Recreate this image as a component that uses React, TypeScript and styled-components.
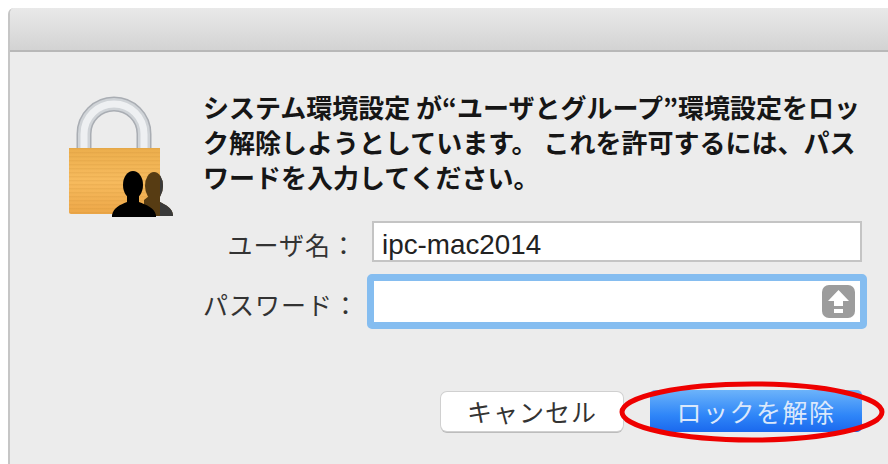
import React from "react";
import styled, { createGlobalStyle } from "styled-components";

const Global = createGlobalStyle`
  html, body { margin: 0; padding: 0; background: #fff; }
  body { width: 888px; height: 464px; overflow: hidden; }
`;

const FONT = `"Noto Sans CJK JP", "Liberation Sans", sans-serif`;

const Sheet = styled.div`
  box-sizing: border-box;
  width: 888px;
  height: 464px;
  padding: 8px 0 0 8px;
  position: relative;
  font-family: ${FONT};
  overflow: hidden;
`;

const Dialog = styled.div`
  height: 456px;
  display: flex;
  flex-direction: column;
  border-left: 2px solid #c6c6c6;
  border-top-left-radius: 6px;
  overflow: hidden;
  background: #ececec;
`;

const TitleBar = styled.div`
  height: 42px;
  flex: none;
  background: linear-gradient(#e9e9e9, #d3d3d3);
  border-bottom: 2px solid #b8b8b8;
`;

const Content = styled.div`
  flex: 1;
  display: flex;
  padding: 37px 22px 0 58px;
`;

const LockSlot = styled.div`
  width: 135px;
  flex: none;
  padding-top: 7px;
`;

const Main = styled.div`
  flex: 1;
  display: flex;
  flex-direction: column;
`;

const Message = styled.p`
  margin: 0;
  font-size: 26px;
  font-weight: 700;
  line-height: 35px;
  color: #161616;
  white-space: nowrap;
  height: 132px;
`;

const Form = styled.div`
  display: flex;
  flex-direction: column;
  gap: 12px;
`;

const Row = styled.div<{ $tall?: boolean }>`
  display: flex;
  align-items: center;
  height: ${(p) => (p.$tall ? "55px" : "41px")};
`;

const Label = styled.label`
  width: 154px;
  flex: none;
  padding-top: 4px;
  text-align: right;
  font-size: 25px;
  letter-spacing: 1px;
  color: #333;
  white-space: nowrap;
`;

const Field = styled.div`
  box-sizing: border-box;
  margin-left: 15px;
  width: 490px;
  height: 41px;
  background: #fff;
  border: 2px solid #c4c4c4;
  padding-left: 8px;
  font-family: "Liberation Sans", sans-serif;
  font-size: 27.8px;
  line-height: 44px;
  color: #222;
`;

const FocusRing = styled.div`
  box-sizing: border-box;
  margin-left: 10px;
  width: 500px;
  height: 55px;
  border: 7px solid #85bdf0;
  border-radius: 5px;
  background: #fff;
  display: flex;
  align-items: center;
  justify-content: flex-end;
  padding-right: 5px;
`;

const Buttons = styled.div`
  display: flex;
  justify-content: flex-end;
  align-items: center;
  gap: 27px;
  margin-top: 61px;
  padding-right: 5px;
`;

const CancelButton = styled.button`
  box-sizing: border-box;
  width: 182px;
  height: 39px;
  border: none;
  border-radius: 6px;
  background: #fff;
  box-shadow: 0 0 0 1px #d0d0d0, 0 2px 0 #bcbcbc;
  font-family: ${FONT};
  font-size: 25px;
  line-height: 1;
  letter-spacing: 1px;
  color: #333;
  padding: 0;
`;

const UnlockButton = styled.button`
  box-sizing: border-box;
  width: 212px;
  height: 42px;
  border: none;
  border-radius: 5px;
  background: linear-gradient(#6cb3fa, #2f86f8 60%, #1a68ee);
  font-family: ${FONT};
  font-size: 25px;
  line-height: 1;
  letter-spacing: 1.5px;
  color: #dbe8fb;
  padding: 0;
`;

const Mark = styled.svg`
  position: absolute;
  left: 618px;
  top: 379px;
  width: 268px;
  height: 66px;
  pointer-events: none;
`;

function LockIcon() {
  const shackle = "M16 54V38a30 30 0 0 1 60 0V54";
  const plate = "M1 52h91v64q0 2-2 2H3q-2 0-2-2z";
  const rear = (
    <>
      <ellipse cx="86" cy="90" rx="9" ry="14" />
      <path d="M81 100h11v6c5 3 12 5 13 13v1H76v-16z" />
    </>
  );
  return (
    <svg width="108" height="124" viewBox="0 0 108 124" style={{ display: "block" }}>
      <defs>
        <linearGradient id="body" x1="0" x2="0" y1="0" y2="1">
          <stop offset="0" stopColor="#ecae4c" />
          <stop offset="0.5" stopColor="#f7bb5e" />
          <stop offset="1" stopColor="#eda748" />
        </linearGradient>
        <pattern id="grain" width="4" height="4" patternUnits="userSpaceOnUse">
          <rect width="4" height="1.5" fill="#c98a30" opacity="0.18" />
        </pattern>
        <clipPath id="offPlate">
          <rect x="92" y="0" width="16" height="124" />
        </clipPath>
      </defs>
      <path d={shackle} fill="none" stroke="#a9adb3" strokeWidth="15" />
      <path d={shackle} fill="none" stroke="#cfd3d7" strokeWidth="12" />
      <path d={shackle} fill="none" stroke="#eef0f2" strokeWidth="7" />
      <path d={plate} fill="url(#body)" />
      <path d={plate} fill="url(#grain)" />
      <g fill="#573c13">{rear}</g>
      <g fill="#3a3a3a" clipPath="url(#offPlate)">{rear}</g>
      <g fill="#000">
        <ellipse cx="65" cy="89" rx="10" ry="14" />
        <path d="M59 100h12v6c7 3 15 5 17 13v2H44v-2c2-8 8-10 15-13z" />
      </g>
    </svg>
  );
}

function CapsLockIcon() {
  return (
    <svg width="33" height="33" viewBox="0 0 33 33" style={{ display: "block" }}>
      <rect width="33" height="33" rx="7" fill="#9c9c9c" />
      <path d="M16.5 5L27 16h-6v5H12v-5H6z" fill="#fff" />
      <rect x="12" y="24" width="9" height="4" fill="#fff" />
    </svg>
  );
}

export default function App() {
  return (
    <Sheet>
      <Global />
      <Dialog>
        <TitleBar />
        <Content>
          <LockSlot>
            <LockIcon />
          </LockSlot>
          <Main>
            <Message>
              システム環境設定 が“ユーザとグループ”環境設定をロッ
              <br />
              ク解除しようとしています。 これを許可するには、パス
              <br />
              ワードを入力してください。
            </Message>
            <Form>
              <Row>
                <Label>ユーザ名：</Label>
                <Field>ipc-mac2014</Field>
              </Row>
              <Row $tall>
                <Label>パスワード：</Label>
                <FocusRing>
                  <CapsLockIcon />
                </FocusRing>
              </Row>
            </Form>
            <Buttons>
              <CancelButton>キャンセル</CancelButton>
              <UnlockButton>ロックを解除</UnlockButton>
            </Buttons>
          </Main>
        </Content>
      </Dialog>
      <Mark viewBox="0 0 268 66">
        <ellipse cx="134" cy="33" rx="130" ry="28" fill="none" stroke="#ee0000" strokeWidth="5" />
      </Mark>
    </Sheet>
  );
}
